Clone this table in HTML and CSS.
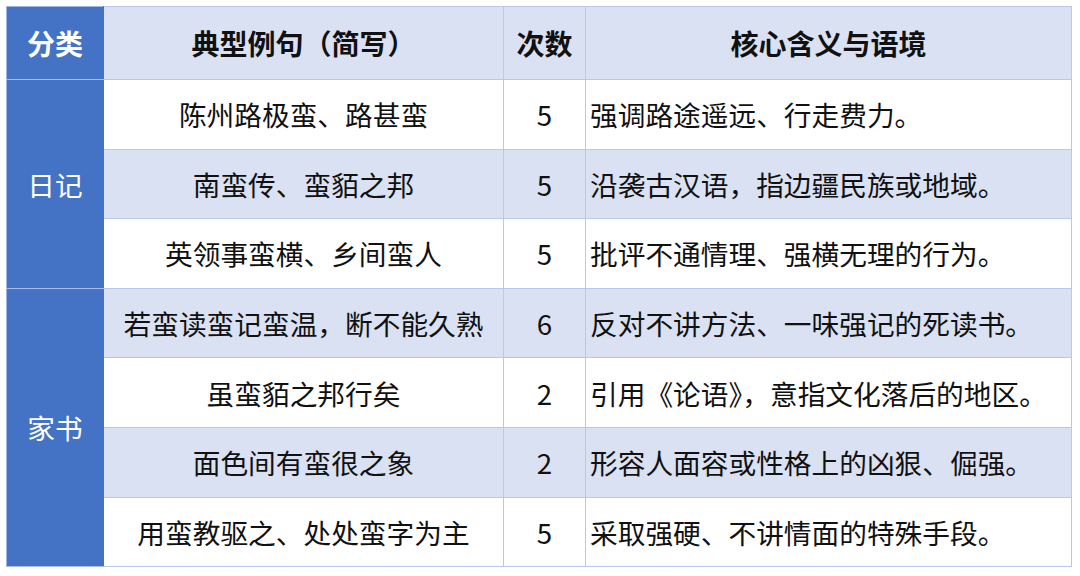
FILE: index.html
```html
<!DOCTYPE html>
<html lang="zh-CN">
<head>
<meta charset="utf-8">
<link rel="stylesheet" href="styles.css">
</head>
<body>
<table class="tbl">
  <colgroup>
    <col class="c1"><col class="c2"><col class="c3"><col class="c4">
  </colgroup>
  <thead>
    <tr class="head">
      <th class="cat">分类</th>
      <th>典型例句（简写）</th>
      <th>次数</th>
      <th>核心含义与语境</th>
    </tr>
  </thead>
  <tbody>
    <tr class="odd">
      <td class="cat" rowspan="3">日记</td>
      <td class="ex">陈州路极蛮、路甚蛮</td>
      <td class="num">5</td>
      <td class="mean">强调路途遥远、行走费力。</td>
    </tr>
    <tr class="even">
      <td class="ex">南蛮传、蛮貊之邦</td>
      <td class="num">5</td>
      <td class="mean">沿袭古汉语，指边疆民族或地域。</td>
    </tr>
    <tr class="odd">
      <td class="ex">英领事蛮横、乡间蛮人</td>
      <td class="num">5</td>
      <td class="mean">批评不通情理、强横无理的行为。</td>
    </tr>
    <tr class="even">
      <td class="cat" rowspan="4">家书</td>
      <td class="ex">若蛮读蛮记蛮温，断不能久熟</td>
      <td class="num">6</td>
      <td class="mean">反对不讲方法、一味强记的死读书。</td>
    </tr>
    <tr class="odd">
      <td class="ex">虽蛮貊之邦行矣</td>
      <td class="num">2</td>
      <td class="mean">引用《论语》，意指文化落后的地区。</td>
    </tr>
    <tr class="even">
      <td class="ex">面色间有蛮很之象</td>
      <td class="num">2</td>
      <td class="mean">形容人面容或性格上的凶狠、倔强。</td>
    </tr>
    <tr class="odd">
      <td class="ex">用蛮教驱之、处处蛮字为主</td>
      <td class="num">5</td>
      <td class="mean">采取强硬、不讲情面的特殊手段。</td>
    </tr>
  </tbody>
</table>
</body>
</html>
```
FILE: styles.css
```css
html, body {
  margin: 0;
  padding: 0;
  background: #ffffff;
}
body {
  padding: 6px 0 0 6px;
  font-family: "Noto Sans CJK SC", "Noto Sans", sans-serif;
  color: #111111;
}
.tbl {
  border-collapse: collapse;
  table-layout: fixed;
  width: 1065px;
  border: 1px solid #9fb6e0;
}
.c1 { width: 97px; }
.c2 { width: 400px; }
.c3 { width: 82px; }
.c4 { width: 486px; }
th, td {
  border: 1px solid #b8c8ea;
  font-size: 27.7px;
  line-height: 32px;
  padding: 0;
  height: 68.6px;
  text-align: center;
  vertical-align: middle;
}
.head th {
  height: 72px;
  background: #d9e1f2;
  font-weight: 700;
  font-size: 28px;
  color: #111111;
}
.head th.cat, td.cat {
  background: #4472c4;
  color: #ffffff;
  border-color: #4472c4;
  border-bottom: 1px solid #a9bde6;
  border-top: 1px solid #a9bde6;
}
.head th.cat {
  border-top-color: #9fb6e0;
  border-left-color: #9fb6e0;
}
td.cat {
  font-weight: 400;
  border-left-color: #9fb6e0;
}
.odd td { background: #ffffff; }
.even td { background: #d9e1f2; }
.odd td.cat, .even td.cat { background: #4472c4; }
td.mean {
  text-align: left;
  padding-left: 4px;
}
```
